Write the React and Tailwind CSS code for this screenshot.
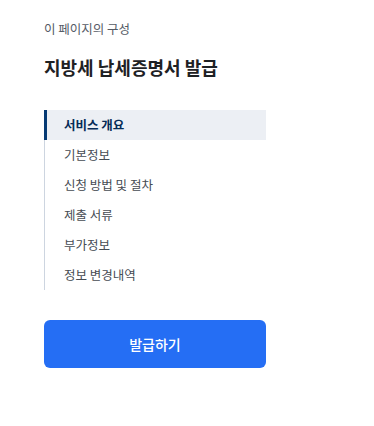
const FONT = { fontFamily: '"Noto Sans CJK KR", "Noto Sans", sans-serif' }

const ITEMS = ["서비스 개요", "기본정보", "신청 방법 및 절차", "제출 서류", "부가정보", "정보 변경내역"]

export default function App() {
  return (
    <div className="min-h-[426px] w-[374px] bg-white px-[44px] pt-[20px]" style={FONT}>
      <p className="text-[12.5px] leading-[18px] text-[#555b66]">이 페이지의 구성</p>
      <h1 className="mt-[16px] text-[18px] font-bold leading-[26px] text-[#1e2124]">지방세 납세증명서 발급</h1>

      <nav className="mt-[30px] w-[222px] border-l border-[#cdd5e0]">
        {ITEMS.map((item, i) => (
          <div
            key={item}
            className={
              i === 0
                ? "-ml-px flex h-[30px] items-center border-l-[3px] border-[#063a74] bg-[#eceff4] pl-[17px] text-[12.5px] font-bold text-[#052b57]"
                : "flex h-[30px] items-center pl-[19px] text-[12.5px] text-[#464c53]"
            }
          >
            {item}
          </div>
        ))}
      </nav>

      <button className="mt-[30px] flex h-[48px] w-[222px] items-center justify-center rounded-[6px] bg-[#256ef4] text-[14px] font-medium text-white">
        발급하기
      </button>
    </div>
  )
}
